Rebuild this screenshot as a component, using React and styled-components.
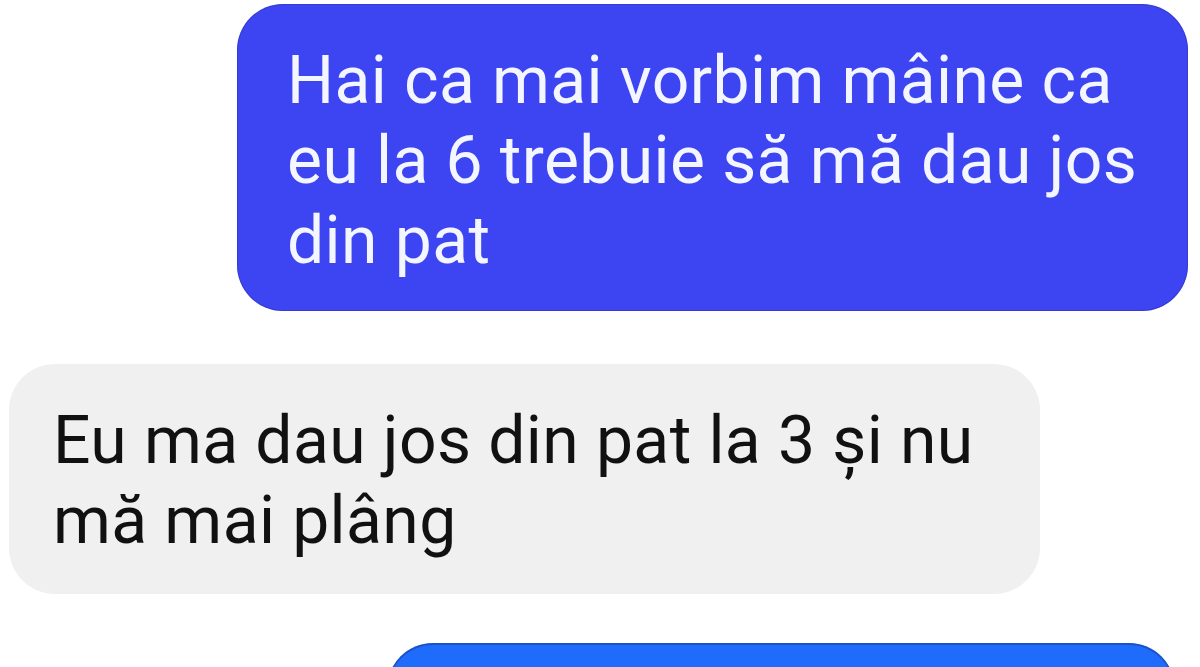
import React from "react";
import styled, { createGlobalStyle } from "styled-components";

const Global = createGlobalStyle`
  html, body {
    margin: 0;
    padding: 0;
    background: #ffffff;
    overflow: hidden;
  }
  body {
    font-family: Roboto, "Liberation Sans", Arial, sans-serif;
  }
`;

const Thread = styled.div`
  display: flex;
  flex-direction: column;
  width: 1200px;
  height: 667px;
  overflow: hidden;
  background: #ffffff;
  padding-top: 4px;
  box-sizing: border-box;
`;

const Row = styled.div`
  display: flex;
  justify-content: ${(p) => (p.$mine ? "flex-end" : "flex-start")};
  padding: ${(p) => p.$pad};
  margin-bottom: ${(p) => p.$gap || 0}px;
  flex-shrink: 0;
`;

const Bubble = styled.div`
  box-sizing: border-box;
  width: ${(p) => p.$w}px;
  min-height: ${(p) => p.$minH || 0}px;
  padding: ${(p) => p.$pad};
  border-radius: 46px;
  background: ${(p) => p.$bg};
  color: ${(p) => p.$fg};
  font-family: Roboto, "Liberation Sans", Arial, sans-serif;
  font-size: 66px;
  line-height: 80px;
  font-weight: 400;
  letter-spacing: 0.4px;
  box-shadow: ${(p) => p.$shadow || "none"};
`;

export default function App() {
  return (
    <>
      <Global />
      <Thread>
        <Row $mine $pad="0 12px 0 0" $gap={53}>
          <Bubble
            $w={951}
            $pad="37px 30px 30px 50px"
            $bg="#3d44f1"
            $fg="#f3f5ff"
            $shadow="inset 0 0 0 1px rgba(40,40,150,0.35)"
          >
            Hai ca mai vorbim mâine ca eu la 6 trebuie să mă dau jos din pat
          </Bubble>
        </Row>
        <Row $pad="0 0 0 9px" $gap={49}>
          <Bubble
            $w={1031}
            $pad="37px 40px 33px 44px"
            $bg="#f0f0f0"
            $fg="#111111"
          >
            Eu ma dau jos din pat la 3 și nu mă mai plâng
          </Bubble>
        </Row>
        <Row $mine $pad="0 25px 0 0">
          <Bubble
            $w={788}
            $minH={200}
            $pad="37px 40px 30px 50px"
            $bg="#1f6bfc"
            $fg="#ffffff"
            $shadow="inset 0 1px 0 1px rgba(20,60,150,0.5)"
          />
        </Row>
      </Thread>
    </>
  );
}
